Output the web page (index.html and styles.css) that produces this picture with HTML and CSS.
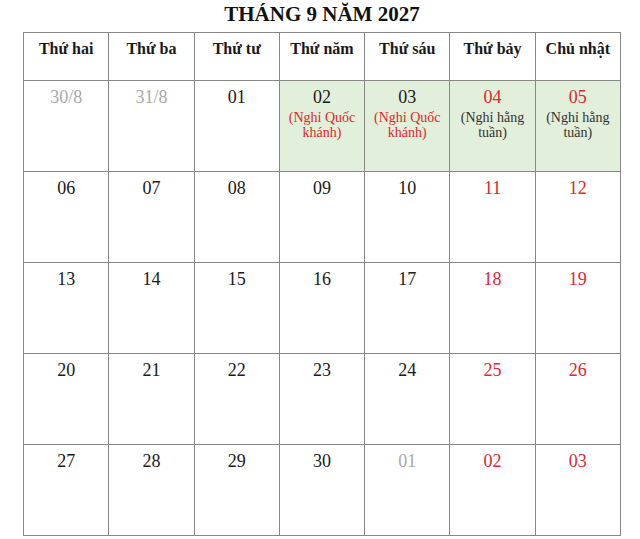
FILE: index.html
```html
<!DOCTYPE html>
<html lang="vi">
<head>
<meta charset="utf-8">
<title>Tháng 9 năm 2027</title>
<link rel="stylesheet" href="styles.css">
</head>
<body>
<div class="page">
  <h1 class="title">THÁNG 9 NĂM 2027</h1>
  <table class="cal">
    <thead>
      <tr>
        <th>Thứ hai</th><th>Thứ ba</th><th>Thứ tư</th><th>Thứ năm</th><th>Thứ sáu</th><th>Thứ bảy</th><th>Chủ nhật</th>
      </tr>
    </thead>
    <tbody>
      <tr>
        <td><span class="d muted">30/8</span></td>
        <td><span class="d muted">31/8</span></td>
        <td><span class="d">01</span></td>
        <td class="hol"><span class="d">02</span><span class="note red">(Nghỉ Quốc khánh)</span></td>
        <td class="hol"><span class="d">03</span><span class="note red">(Nghỉ Quốc khánh)</span></td>
        <td class="hol"><span class="d red">04</span><span class="note">(Nghỉ hằng tuần)</span></td>
        <td class="hol"><span class="d red">05</span><span class="note">(Nghỉ hằng tuần)</span></td>
      </tr>
      <tr>
        <td><span class="d">06</span></td>
        <td><span class="d">07</span></td>
        <td><span class="d">08</span></td>
        <td><span class="d">09</span></td>
        <td><span class="d">10</span></td>
        <td><span class="d red">11</span></td>
        <td><span class="d red">12</span></td>
      </tr>
      <tr>
        <td><span class="d">13</span></td>
        <td><span class="d">14</span></td>
        <td><span class="d">15</span></td>
        <td><span class="d">16</span></td>
        <td><span class="d">17</span></td>
        <td><span class="d red">18</span></td>
        <td><span class="d red">19</span></td>
      </tr>
      <tr>
        <td><span class="d">20</span></td>
        <td><span class="d">21</span></td>
        <td><span class="d">22</span></td>
        <td><span class="d">23</span></td>
        <td><span class="d">24</span></td>
        <td><span class="d red">25</span></td>
        <td><span class="d red">26</span></td>
      </tr>
      <tr>
        <td><span class="d">27</span></td>
        <td><span class="d">28</span></td>
        <td><span class="d">29</span></td>
        <td><span class="d">30</span></td>
        <td><span class="d muted">01</span></td>
        <td><span class="d red">02</span></td>
        <td><span class="d red">03</span></td>
      </tr>
    </tbody>
  </table>
</div>
</body>
</html>
```
FILE: styles.css
```css
html, body {
  margin: 0;
  padding: 0;
  background: #ffffff;
}
body {
  font-family: "Liberation Serif", "Times New Roman", serif;
  color: #1a1a1a;
}
.page {
  padding-left: 23px;
  width: 598px;
}
.title {
  margin: 0 0 6px 0;
  padding-top: 2px;
  font-size: 21px;
  line-height: 24px;
  font-weight: bold;
  text-align: center;
  color: #111111;
}
.cal {
  width: 598px;
  table-layout: fixed;
  border-collapse: collapse;
}
.cal th,
.cal td {
  border: 1px solid #888888;
  text-align: center;
  vertical-align: top;
  padding: 0;
}
.cal th {
  height: 48px;
  padding-top: 7px;
  box-sizing: border-box;
  font-size: 16px;
  line-height: 18px;
  font-weight: bold;
  color: #1a1a1a;
}
.cal td {
  height: 91px;
  padding-top: 6px;
  box-sizing: border-box;
}
.cal td.hol {
  background: #e2efda;
}
.d {
  display: block;
  font-size: 18px;
  line-height: 20px;
}
.note {
  display: block;
  margin: 3px auto 0;
  width: 72px;
  font-size: 14px;
  line-height: 15px;
  color: #333333;
}
.red {
  color: #e0262e;
}
.muted {
  color: #a8a8a8;
}
```
